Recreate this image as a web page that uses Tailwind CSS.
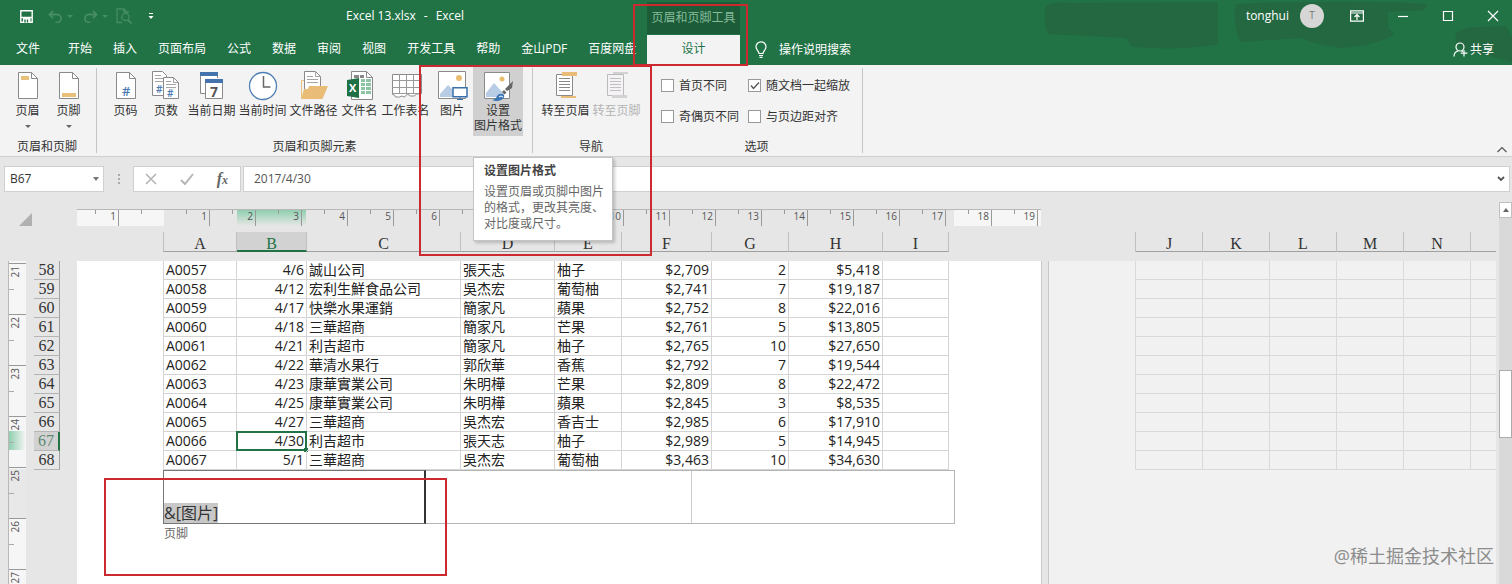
<!DOCTYPE html>
<html lang="zh-CN">

<head>
    <meta charset="UTF-8">
    <meta name="viewport" content="width=device-width, initial-scale=1.0">
    <title>Excel 13.xlsx - Excel</title>
    <script src="https://cdn.jsdelivr.net/npm/@tailwindcss/browser@4"></script>
</head>

<body class="h-screen overflow-hidden flex flex-col relative bg-[#e6e6e6] text-[#333] text-xs font-['Open_Sans','Noto_Sans_CJK_SC',sans-serif]">

    <!-- 标题栏和选项卡 -->
    <header class="relative shrink-0 bg-[#217346] text-white">
        <!-- 右上角的深色涂抹 -->
        <svg class="absolute right-0 top-0" width="480" height="64" viewBox="0 0 480 64" fill="#236840">
            <path d="M14 6Q20 1 40 3L186 2V44Q150 51 100 47L94 38Q60 36 16 34Q10 20 14 6Z" />
            <path d="M204 4Q240 1 360 2L396 4L392 10L356 12V28L362 34Q350 44 310 48Q280 44 270 38L208 42Q200 20 204 4Z" />
            <path d="M424 34Q430 26 450 27L474 26L480 36V62L440 52Q420 46 424 34Z" />
        </svg>

        <div class="relative h-[34px] flex items-center justify-between">
            <div class="w-[647px] shrink-0 h-full pl-5 pb-[2px] flex items-center">
                <button aria-label="保存"><svg width="13" height="13" viewBox="0 0 13 13" fill="none" stroke="#fff" stroke-width="1.4"><path d="M.8.8h11.400v11.400H.8zM.8 7.500h11.400" /><path d="M3 8h7.500v4H3z" fill="#fff" stroke="none" /><path d="M5 12.500V9.500M7.500 12.500V9.500" stroke="#217346" /></svg></button>
                <button class="ml-[15px]" aria-label="撤消"><svg width="15" height="13" viewBox="0 0 15 13" fill="none" stroke="#468c64" stroke-width="1.8"><path d="M5 1L1.500 4.500L5 8M2 4.500H9a4 4 0 0 1 0 8H7.500" /></svg></button>
                <span class="ml-1 border-x-[3px] border-t-[3px] border-x-transparent border-t-[#468c64]"></span>
                <button class="ml-[10px]" aria-label="恢复"><svg width="15" height="13" viewBox="0 0 15 13" fill="none" stroke="#468c64" stroke-width="1.8"><path d="M10 1l3.500 3.500L10 8M13 4.500H6a4 4 0 0 0 0 8H7.500" /></svg></button>
                <span class="ml-1 border-x-[3px] border-t-[3px] border-x-transparent border-t-[#468c64]"></span>
                <button class="ml-2" aria-label="打印预览"><svg width="16" height="16" viewBox="0 0 16 16" fill="none" stroke="#468c64" stroke-width="1.3"><path d="M6 14.500H1V1h7l3 3M8 1v3h4v1" /><circle cx="9.500" cy="9" r="3.700" /><path d="M12 12l3.500 3.500" stroke-width="1.800" /></svg></button>
                <button class="ml-4" aria-label="自定义快速访问工具栏"><svg width="6" height="8" viewBox="0 0 6 8"><path d="M1 1.500h4" stroke="#fff" /><path d="M.5 4h5L3 7z" fill="#fff" /></svg></button>
                <h1 class="ml-[192px] flex gap-2"><span>Excel 13.xlsx</span><span>-</span><span>Excel</span></h1>
            </div>
            <div class="w-[93px] shrink-0 h-8 self-end bg-[#1c5c38] text-[#86bb9b] flex justify-center items-center pb-px">页眉和页脚工具</div>
            <div class="flex-1 flex justify-end items-center pr-[13px] pb-[3px]">
                <span>tonghui</span>
                <span class="ml-[11px] size-6 rounded-full bg-[#d6d6d6] text-[#777] text-[10px] flex items-center justify-center">T</span>
                <div class="ml-[26px] flex items-center gap-[33px]">
                    <button aria-label="功能区显示选项"><svg width="14" height="12" viewBox="0 0 14 12" fill="none" stroke="#fff" stroke-width="1.200"><path d="M.6.8h12.800v10.400H.6zM.6 3h12.800M7 10V5M4.500 7L7 4.600L9.500 7" /></svg></button>
                    <button aria-label="最小化"><svg width="12" height="12" viewBox="0 0 12 12" stroke="#fff" stroke-width="1.200"><path d="M1 6.500h10" /></svg></button>
                    <button aria-label="最大化"><svg width="12" height="12" viewBox="0 0 12 12" fill="none" stroke="#fff" stroke-width="1.200"><path d="M1.500 1.500h9v9h-9z" /></svg></button>
                    <button aria-label="关闭"><svg width="12" height="12" viewBox="0 0 12 12" stroke="#fff" stroke-width="1.200"><path d="M1 1l10 10M11 1L1 11" /></svg></button>
                </div>
            </div>
        </div>

        <div class="relative h-[31px] flex items-center">
            <nav class="w-[647px] shrink-0 pl-4 pb-px flex gap-[21px] whitespace-nowrap">
                <button class="mr-[7px]">文件</button>
                <button>开始</button>
                <button>插入</button>
                <button>页面布局</button>
                <button>公式</button>
                <button>数据</button>
                <button>审阅</button>
                <button>视图</button>
                <button>开发工具</button>
                <button>帮助</button>
                <button>金山PDF</button>
                <button>百度网盘</button>
            </nav>
            <button class="w-[93px] shrink-0 h-[30px] self-end bg-[#f3f3f3] text-[#217346] pb-[3px]">设计</button>
            <button class="ml-3.5 flex items-center gap-[11px]">
                <svg width="14" height="17" viewBox="0 0 14 17" fill="none" stroke="#fff" stroke-width="1.200"><path d="M5 12.500C5 10 2 9 2 5.800a5 5 0 0 1 10 0C12 9 9 10 9 12.500zM5 14.500h4M5.500 16.300h3" /></svg>
                操作说明搜索
            </button>
            <button class="ml-auto pr-[18px] flex items-center gap-[2px]">
                <svg width="15" height="15" viewBox="0 0 15 15" fill="none" stroke="#fff" stroke-width="1.200"><circle cx="7" cy="5" r="4" /><path d="M1 14.500Q1 10 5 9M8.500 9L10 9.500M11 8v6.500M7.800 11.200h6.500" /></svg>
                共享
            </button>
        </div>
    </header>

    <!-- 功能区 -->
    <section class="relative shrink-0 h-[92px] bg-[#f3f3f3] border-b border-[#d0d0d0] flex text-[#333] leading-[15px] whitespace-nowrap">
        <div class="w-[97px] shrink-0 my-[3px] border-r border-[#c6c6c6] pl-[7px] flex flex-col">
            <div class="flex flex-1">
                <button class="w-[41px] flex flex-col items-center justify-start pt-px">
                    <svg width="32" height="34" viewBox="0 0 32 34"><path d="M6.500 3.500h13l6 6v20h-19z" fill="#fff" stroke="#8a8a8a" /><path d="M19.500 3.500v6h6" fill="none" stroke="#8a8a8a" /><path d="M9 7h8v4H9z" fill="#e9c07a" /></svg>
                    页眉
                    <span class="mt-[7px] border-x-[3px] border-t-[3px] border-x-transparent border-t-[#666]"></span>
                </button>
                <button class="w-[41px] flex flex-col items-center justify-start pt-px">
                    <svg width="32" height="34" viewBox="0 0 32 34"><path d="M6.500 3.500h13l6 6v20h-19z" fill="#fff" stroke="#8a8a8a" /><path d="M19.500 3.500v6h6" fill="none" stroke="#8a8a8a" /><path d="M9 24h14v4H9z" fill="#e9c07a" /></svg>
                    页脚
                    <span class="mt-[7px] border-x-[3px] border-t-[3px] border-x-transparent border-t-[#666]"></span>
                </button>
            </div>
            <div class="pl-[10px] leading-3">页眉和页脚</div>
        </div>

        <div class="w-[436px] shrink-0 my-[3px] border-r border-[#c6c6c6] pl-2 pr-2 flex flex-col">
            <div class="flex flex-1">
                <button class="w-[41px] flex flex-col items-center justify-start pt-px">
                    <svg width="32" height="34" viewBox="0 0 32 34"><path d="M6.500 3.500h13l6 6v20h-19z" fill="#fff" stroke="#8a8a8a" /><path d="M19.500 3.500v6h6" fill="none" stroke="#8a8a8a" /><text x="12" y="27" font-size="13" font-weight="600" fill="#4a7ab0">#</text></svg>
                    页码
                </button>
                <button class="w-10 flex flex-col items-center justify-start pt-px">
                    <svg width="32" height="34" viewBox="0 0 32 34"><path d="M2.500 2.500h10l4 4v20h-14z" fill="#fff" stroke="#8a8a8a" /><path d="M5 6.500h6M5 9.500h8M5 12.500h8" stroke="#a5a5a5" /><text x="6" y="24" font-size="10" font-weight="600" fill="#4a7ab0">#</text><path d="M13.500 8.500h10l5 5v16h-15z" fill="#fff" stroke="#8a8a8a" /><path d="M23.500 8.500v5h5M16 12.500h5M16 15.500h10M16 18.500h10" fill="none" stroke="#a5a5a5" /><text x="17" y="28" font-size="10" font-weight="600" fill="#4a7ab0">#</text></svg>
                    页数
                </button>
                <button class="w-[51px] flex flex-col items-center justify-start pt-px">
                    <svg width="32" height="34" viewBox="0 0 32 34"><path d="M4.500 4.500h17v20h-17z" fill="#fff" stroke="#8a8a8a" /><path d="M4 3h18v4H4z" fill="#4472ac" /><path d="M9 9h19v21H9z" fill="#f3f3f3" /><path d="M9.500 10.500h17v19h-17z" fill="#fff" stroke="#8a8a8a" /><path d="M9 10h18v4H9z" fill="#4472ac" /><text x="14" y="28" font-size="14" font-weight="700" fill="#555">7</text></svg>
                    当前日期
                </button>
                <button class="w-[51px] flex flex-col items-center justify-start pt-px">
                    <svg width="32" height="34" viewBox="0 0 32 34"><circle cx="16" cy="17" r="13.500" fill="#fff" stroke="#4f7fb5" stroke-width="1.300" /><path d="M16.500 7v11h7" fill="none" stroke="#666" stroke-width="1.500" /></svg>
                    当前时间
                </button>
                <button class="w-[51px] flex flex-col items-center justify-start pt-px">
                    <svg width="32" height="34" viewBox="0 0 32 34"><path d="M3.500 30V11.500H7" fill="none" stroke="#e9c07a" /><path d="M6.500 2.500h11l5 5v17h-16z" fill="#fff" stroke="#8a8a8a" /><path d="M17.500 2.500v5h5M9 7.500h6M9 10.500h11M9 13.500h11" fill="none" stroke="#a5a5a5" /><path d="M11 17h19L24.500 30H3L6 20h4z" fill="#e9bd78" /></svg>
                    文件路径
                </button>
                <button class="w-[41px] flex flex-col items-center justify-start pt-px">
                    <svg width="32" height="34" viewBox="0 0 32 34"><path d="M7.500 2.500h15l6 6v22h-21z" fill="#fff" stroke="#8a8a8a" /><path d="M22.500 2.500v6h6" fill="none" stroke="#8a8a8a" /><path d="M10 6h5v3h-5zM16 6h4v3h-4z" fill="#888" /><path d="M17 10h4v3h-4zM22 10h5v3h-5zM17 14h4v3h-4zM22 14h5v3h-5zM17 18h4v3h-4zM22 18h5v3h-5zM17 22h4v3h-4zM22 22h5v3h-5z" fill="#8cc5a3" /><path d="M3 11l12-2v20L3 27z" fill="#1f7145" /><text x="5" y="23" font-size="11" font-weight="700" fill="#fff">X</text></svg>
                    文件名
                </button>
                <button class="w-[51px] flex flex-col items-center justify-start pt-px">
                    <svg width="32" height="34" viewBox="0 0 32 34"><path d="M2.500 5.500h29v19l-5 .5-2 2h-4l-3-2-3 3-3-1-2 1h-4l-1-2-2-.5z" fill="#fff" stroke="#8a8a8a" /><path d="M9.500 5v20M16.500 5v20M23.500 5v20M2 11.500h30M2 18.500h30M2 24.500h30" stroke="#9a9a9a" /></svg>
                    工作表名
                </button>
                <button class="w-[42px] flex flex-col items-center justify-start pt-px">
                    <svg width="32" height="34" viewBox="0 0 32 34"><path d="M2.500 2.500h27v27h-27z" fill="#fff" stroke="#8a8a8a" /><circle cx="23" cy="9" r="3" fill="#e9bd70" /><path d="M4 28V25l8-9 7 7v5z" fill="#b8cce6" /><path d="M17 18.700h14v9H17z" fill="#fff" stroke="#3a70ad" stroke-width="1.500" /><path d="M24 28v2.500M21 30.500h6" stroke="#3a70ad" /></svg>
                    图片
                </button>
                <button class="w-[50px] h-[69px] -mt-px pt-[2px] bg-[#d0d0d0] flex flex-col items-center justify-start">
                    <svg width="32" height="34" viewBox="0 0 32 34"><path d="M2.500 3.500h25v26h-25z" fill="#fff" stroke="#8a8a8a" /><circle cx="20" cy="10" r="2.500" fill="#e9bd70" /><path d="M4 28v-4l8-10 10 11v3z" fill="#b8cce6" /><path d="M31 12l-1 7-5 3-2-2zM22 21l2.500 2.500-2 2-2.500-2.500z" fill="#666" /><path d="M10 31q4-1 5-4 3-4 7-1 1 3-3 5-4 2-9 0z" fill="#3a75b3" /><path d="M17 28q2-2 4 0" stroke="#fff" fill="none" /></svg>
                    设置<br>图片格式
                </button>
            </div>
            <div class="text-center leading-3">页眉和页脚元素</div>
        </div>

        <div class="w-[118px] shrink-0 my-[3px] border-r border-[#c6c6c6] pl-[7px] flex flex-col">
            <div class="flex flex-1">
                <button class="w-[51px] flex flex-col items-center justify-start pt-px">
                    <svg width="32" height="34" viewBox="0 0 32 34"><path d="M6.500 5.500h16v21h-16z" fill="#fff" stroke="#8a8a8a" /><path d="M9 9.500h11M9 12.500h11M9 15.500h11M9 18.500h11M9 21.500h11" stroke="#8a8a8a" /><path d="M12 3h15v4H12zM11 27h15v2H11z" fill="#e9bd78" /></svg>
                    转至页眉
                </button>
                <button class="w-[51px] flex flex-col items-center justify-start pt-px text-[#b3b3b3]" disabled>
                    <svg width="32" height="34" viewBox="0 0 32 34"><path d="M6.500 5.500h16v21h-16z" fill="#f5f2f5" stroke="#bbb" /><path d="M9 9.500h11M9 12.500h11M9 15.500h11M9 18.500h11M9 21.500h11" stroke="#c0c0c0" /><path d="M12 3h15v2H12zM11 26h15v3H11z" fill="#d2d2d2" /></svg>
                    转至页脚
                </button>
            </div>
            <div class="text-center leading-3 pr-2">导航</div>
        </div>

        <div class="w-[212px] shrink-0 my-[3px] border-r border-[#c6c6c6] pl-[10px] flex flex-col">
            <div class="flex-1 pt-[10px] grid grid-cols-[87px_1fr] gap-y-4 content-start">
                <label class="flex items-center gap-[5px]"><input type="checkbox" class="appearance-none size-[13px] bg-white border border-[#999]">首页不同</label>
                <label class="relative flex items-center gap-[5px]"><input type="checkbox" checked class="appearance-none size-[13px] bg-white border border-[#999]">随文档一起缩放
                    <svg class="absolute left-[2px] top-[3px]" width="10" height="9" viewBox="0 0 10 9" fill="none" stroke="#555" stroke-width="1.300"><path d="M1 4.500l2.500 3L9 1.500" /></svg></label>
                <label class="flex items-center gap-[5px]"><input type="checkbox" class="appearance-none size-[13px] bg-white border border-[#999]">奇偶页不同</label>
                <label class="flex items-center gap-[5px]"><input type="checkbox" class="appearance-none size-[13px] bg-white border border-[#999]">与页边距对齐</label>
            </div>
            <div class="text-center leading-3 pr-[10px]">选项</div>
        </div>
        <button class="ml-auto self-end pr-1 pb-[3px]" aria-label="折叠功能区"><svg width="12" height="7" viewBox="0 0 12 7" fill="none" stroke="#555" stroke-width="1.200"><path d="M1.500 6L6 1.500L10.500 6" /></svg></button>
    </section>

    <!-- 编辑栏 -->
    <section class="shrink-0 h-[45px] pt-[9px] pl-1 pr-[2px] flex items-start">
        <div class="w-[100px] h-[26px] bg-white border border-[#d0d0d0] flex items-center justify-between pr-1">
            <input aria-label="名称框" value="B67" class="w-16 pl-[5px] text-[#333] outline-none">
            <span class="border-x-[3px] border-t-[4px] border-x-transparent border-t-[#777]"></span>
        </div>
        <div class="w-[29px] h-[26px] flex flex-col items-center justify-center gap-[2px]">
            <span class="size-[2px] bg-[#aaa]"></span><span class="size-[2px] bg-[#aaa]"></span><span class="size-[2px] bg-[#aaa]"></span>
        </div>
        <div class="w-[108px] h-[26px] bg-white border border-[#d0d0d0] flex items-center justify-between pl-[11px] pr-3">
            <button aria-label="取消"><svg width="12" height="12" viewBox="0 0 12 12" stroke="#b5b5b5" stroke-width="1.600"><path d="M1 1l10 10M11 1L1 11" /></svg></button>
            <button aria-label="输入"><svg width="14" height="12" viewBox="0 0 14 12" fill="none" stroke="#b5b5b5" stroke-width="2"><path d="M1 7l4 4L13 1" /></svg></button>
            <button class="font-['Liberation_Serif',serif] italic font-bold text-[#666] leading-4" aria-label="插入函数"><span class="text-base leading-4">f</span><span>x</span></button>
        </div>
        <div class="flex-1 ml-[2px] h-[26px] bg-white border border-[#d0d0d0] flex items-center pr-1">
            <input aria-label="编辑栏" value="2017/4/30" class="flex-1 pl-[10px] text-[#555] outline-none">
            <svg width="8" height="6" viewBox="0 0 8 6" fill="none" stroke="#555" stroke-width="1.800"><path d="M1 1l3 3l3-3" /></svg>
        </div>
    </section>

    <!-- 工作表 -->
    <main class="flex-1 min-h-0 flex">
        <div class="flex-1 min-w-0 flex flex-col pt-[7px]">
            <!-- 水平标尺 -->
            <div class="shrink-0 flex h-[17px]">
                <div class="w-[77px] shrink-0 flex items-end pl-[19px]"><svg width="13" height="13" viewBox="0 0 13 13"><path d="M13 0v13H0z" fill="#b0b0b0" /></svg></div>
                <div id="ruler" class="relative w-[964px] shrink-0 flex border-t border-[#b8b8b8] bg-[linear-gradient(90deg,#f6f6f6_87px,transparent_87px,transparent_877px,#f6f6f6_877px)] text-[10px] leading-3 text-[#555]">
                    <span class="absolute left-[160px] top-0 w-[69px] h-4 bg-linear-to-b from-[#8fcfb0] to-[#e6e6e6]"></span>
                </div>
            </div>

            <!-- 列标 -->
            <div class="shrink-0 mt-[6px] flex h-5 font-['Liberation_Serif',serif] text-base leading-6 text-[#333] text-center">
                <div class="w-[163px] shrink-0"></div>
                <div id="colHeads" class="w-[972px] shrink-0 flex"></div>
                <div id="colHeadsNext" class="flex-1 mr-[3px] flex overflow-hidden border-l border-[#c0c0c0]"></div>
            </div>

            <div class="flex-1 min-h-0 mt-[9px] flex">
                <!-- 垂直标尺 -->
                <div id="vRuler" class="relative w-[18px] ml-2 shrink-0 pt-[2px] overflow-hidden border-l border-[#b8b8b8] bg-[linear-gradient(180deg,#f6f6f6_208px,#e8e8e8_208px,#e8e8e8_258px,#f6f6f6_258px)] text-[10px] leading-[12px] text-[#555]">
                    <span class="absolute left-0 top-[170px] w-4 h-[19px] bg-linear-to-r from-[#8fcfb0] to-[#f0f4f2]"></span>
                </div>
                <div id="rowHeads" class="w-[34px] shrink-0 pl-2 font-['Liberation_Serif',serif] text-base leading-[18px] text-[#333] text-center"></div>

                <!-- 当前页 -->
                <div class="w-[965px] ml-[17px] shrink-0 bg-white border-r border-[#c8c8c8] pl-[86px]">
                    <table class="w-[786px] table-fixed border-separate border-spacing-0 text-sm leading-[17px] text-[#222] whitespace-nowrap font-['Open_Sans','Noto_Sans_CJK_TC',sans-serif]">
                        <colgroup id="sheetCols"></colgroup>
                        <tbody id="sheetRows"></tbody>
                    </table>
                    <!-- 页脚的三个区域 -->
                    <div class="w-[792px] h-[54px] flex border border-[#b5b5b5]">
                        <div class="w-[263px] -m-px mr-0 border border-r-2 border-[#777] border-r-[#333] flex items-end">
                            <span class="bg-[#c8c8c8] text-base leading-5 text-[#333]">&amp;[图片]</span>
                        </div>
                        <div class="w-[266px] border-r border-[#ccc]"></div>
                    </div>
                    <div class="text-[#666] leading-5 pl-px">页脚</div>
                </div>

                <!-- 下一页 -->
                <div class="flex-1 min-w-0 ml-[6px] mr-[3px] border-l border-[#c8c8c8] bg-[#f1f1f1] pl-[86px]">
                    <table class="w-full table-fixed border-separate border-spacing-0">
                        <colgroup id="nextCols"></colgroup>
                        <tbody id="nextRows"></tbody>
                    </table>
                </div>
            </div>
        </div>

        <!-- 垂直滚动条 -->
        <div class="w-[13px] shrink-0 flex flex-col bg-[#d9d9d9]">
            <button class="h-4 bg-white border border-[#c0c0c0] flex items-center justify-center" aria-label="向上滚动"><span class="border-x-[3px] border-b-[4px] border-x-transparent border-b-[#666]"></span></button>
            <div class="mt-[152px] h-[68px] bg-white border border-[#ababab]"></div>
        </div>
    </main>

    <!-- 悬停提示 -->
    <div role="tooltip" class="absolute left-[473px] top-[157px] w-[140px] h-[84px] bg-white border border-[#c4c4c4] shadow-[2px_2px_3px_rgba(0,0,0,0.2)] pl-[10px] pt-[5px] leading-4 text-[#666] whitespace-nowrap">
        <div class="font-bold text-[#444] mb-[5px]">设置图片格式</div>
        设置页眉或页脚中图片<br>的格式，更改其亮度、<br>对比度或尺寸。
    </div>

    <!-- 红色标注框 -->
    <div class="absolute left-[633px] top-1 w-[115px] h-[62px] border-2 border-[#cc2a30]"></div>
    <div class="absolute left-[419px] top-[65px] w-[233px] h-[191px] border-2 border-[#cc2a30]"></div>
    <div class="absolute left-[104px] top-[478px] w-[343px] h-[98px] border-2 border-[#cc2a30]"></div>

    <div class="absolute right-[18px] bottom-4 text-lg leading-6 text-[#8c8c8c]">@稀土掘金技术社区</div>

    <script>
        // 列宽，第一列包含左侧边线
        const columns = [
            { name: 'A', width: 74 }, { name: 'B', width: 70 }, { name: 'C', width: 154 },
            { name: 'D', width: 94 }, { name: 'E', width: 67 }, { name: 'F', width: 90 },
            { name: 'G', width: 77 }, { name: 'H', width: 94 }, { name: 'I', width: 66 }
        ];
        const nextColumns = ['J', 'K', 'L', 'M', 'N'];
        const firstRow = 58;
        const selectedRow = 67;

        const rows = [
            ['A0057', '4/6', '誠山公司', '張天志', '柚子', '$2,709', '2', '$5,418'],
            ['A0058', '4/12', '宏利生鮮食品公司', '吳杰宏', '葡萄柚', '$2,741', '7', '$19,187'],
            ['A0059', '4/17', '快樂水果運銷', '簡家凡', '蘋果', '$2,752', '8', '$22,016'],
            ['A0060', '4/18', '三華超商', '簡家凡', '芒果', '$2,761', '5', '$13,805'],
            ['A0061', '4/21', '利吉超市', '簡家凡', '柚子', '$2,765', '10', '$27,650'],
            ['A0062', '4/22', '華清水果行', '郭欣華', '香蕉', '$2,792', '7', '$19,544'],
            ['A0063', '4/23', '康華實業公司', '朱明樺', '芒果', '$2,809', '8', '$22,472'],
            ['A0064', '4/25', '康華實業公司', '朱明樺', '蘋果', '$2,845', '3', '$8,535'],
            ['A0065', '4/27', '三華超商', '吳杰宏', '香吉士', '$2,985', '6', '$17,910'],
            ['A0066', '4/30', '利吉超市', '張天志', '柚子', '$2,989', '5', '$14,945'],
            ['A0067', '5/1', '三華超商', '吳杰宏', '葡萄柚', '$3,463', '10', '$34,630']
        ];

        const byId = id => document.getElementById(id);
        const append = (id, html) => byId(id).insertAdjacentHTML('beforeend', html);

        // 水平标尺：左页边距、零点之前，然后每厘米一格
        let ruler = '<div class="relative flex w-[42px]"><span class="w-[19px] h-1 border-r border-[#999]"></span><span class="w-[23px] h-4 pr-[2px] text-right border-r border-[#999]">1</span></div>';
        ruler += '<div class="relative flex w-[45px]"><span class="w-[23px] h-1 border-r border-[#999]"></span></div>';
        for (let i = 1; i <= 19; i++) {
            ruler += `<div class="relative flex w-[46px] shrink-0"><span class="w-[23px] h-1 border-r border-[#999]"></span><span class="w-[23px] h-4 pr-[2px] text-right border-r border-[#999]">${i}</span></div>`;
        }
        append('ruler', ruler);

        // 垂直标尺
        for (let i = 21; i <= 27; i++) {
            append('vRuler', `<div class="relative h-[51px] border-t border-[#999] flex flex-col items-start"><span class="h-[25px] w-3 pt-[2px] [writing-mode:vertical-rl]"><span class="inline-block rotate-180">${i}</span></span><span class="w-[5px] border-t border-[#aaa]"></span></div>`);
        }

        // 列标和行号
        columns.forEach((col, i) => {
            const look = col.name === 'B' ? 'bg-[#d2d2d2] text-[#217346] border-b-2 border-b-[#217346]' : 'border-b border-b-[#a0a0a0]';
            const left = i === 0 ? 'border-l border-l-[#c0c0c0]' : '';
            append('colHeads', `<div class="shrink-0 border-r border-r-[#c0c0c0] ${look} ${left}" style="width:${col.width}px">${col.name}</div>`);
        });
        nextColumns.forEach(name => append('colHeadsNext', `<div class="w-[67px] shrink-0 border-r border-r-[#c0c0c0] border-b border-b-[#a0a0a0]">${name}</div>`));
        append('colHeadsNext', '<div class="flex-1 border-b border-[#a0a0a0]"></div>');
        rows.forEach((row, i) => {
            const number = firstRow + i;
            const look = number === selectedRow ? 'bg-[#d2d2d2] text-[#5b8a70] border-r-2 border-r-[#217346]' : 'border-r border-r-[#a0a0a0]';
            append('rowHeads', `<div class="h-[19px] border-b border-b-[#b5b5b5] ${look}">${number}</div>`);
        });

        // 数据区
        columns.forEach(col => append('sheetCols', `<col style="width:${col.width}px">`));
        const rightAligned = [1, 5, 6, 7];
        rows.forEach((row, r) => {
            const cells = columns.map((col, c) => {
                const align = rightAligned.includes(c) ? 'text-right' : 'text-left';
                const left = c === 0 ? 'border-l' : '';
                const cursor = c === 1 && firstRow + r === selectedRow
                    ? '<span class="absolute -left-px -top-px -right-px -bottom-px border-2 border-[#217346]"></span><span class="absolute -right-[2px] -bottom-[2px] size-1 bg-[#217346]"></span>' : '';
                return `<td class="relative h-[19px] px-[2px] pt-0 pb-px border-r border-b border-[#d4d4d4] ${align} ${left}">${row[c] || ''}${cursor}</td>`;
            });
            append('sheetRows', `<tr>${cells.join('')}</tr>`);
        });

        // 下一页的空白网格
        nextColumns.forEach((name, i) => append('nextCols', `<col style="width:${i === 0 ? 68 : 67}px">`));
        append('nextCols', '<col>');
        rows.forEach(() => {
            const cells = nextColumns.map((name, i) => `<td class="h-[19px] p-0 border-r border-b border-[#d9d9d9] ${i === 0 ? 'border-l' : ''}"></td>`);
            append('nextRows', `<tr>${cells.join('')}<td class="border-b border-[#d9d9d9]"></td></tr>`);
        });
    </script>
</body>

</html>
